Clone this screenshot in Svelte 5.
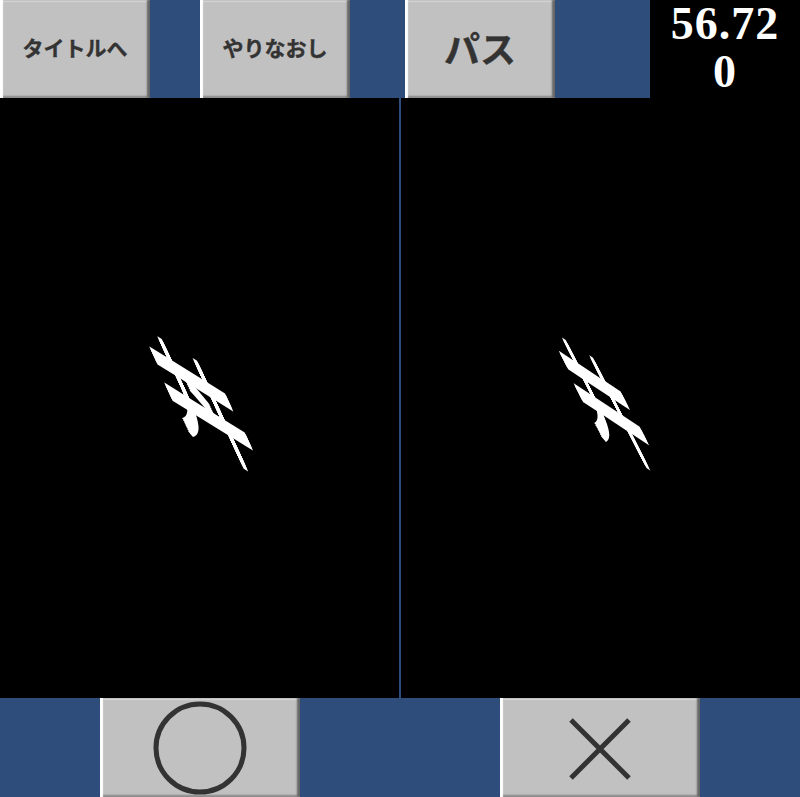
<script>
  const actions = [
    { label: 'タイトルへ', big: false },
    { label: 'やりなおし', big: false },
    { label: 'パス', big: true }
  ];
</script>

<div class="screen">
  <header class="top">
    <div class="actions">
      {#each actions as a}
        <button class="btn" class:big={a.big}>{a.label}</button>
      {/each}
    </div>
    <div class="score">56.72<br />0</div>
  </header>

  <main class="stage">
    <section class="panel">
      <span class="glyph left">丼</span>
    </section>
    <section class="panel">
      <span class="glyph right">井</span>
    </section>
  </main>

  <footer class="bottom">
    <button class="btn answer" aria-label="正解">
      <svg width="96" height="96" viewBox="0 0 96 96"><circle cx="48" cy="48" r="44" fill="none" stroke="#333" stroke-width="5" /></svg>
    </button>
    <button class="btn answer" aria-label="不正解">
      <svg width="96" height="96" viewBox="0 0 96 96"><path d="M19 20 L77 78 M77 20 L19 78" fill="none" stroke="#333" stroke-width="5" /></svg>
    </button>
  </footer>
</div>

<style>
  :global(body) {
    margin: 0;
    background: #000;
  }
  .screen {
    width: 800px;
    height: 797px;
    display: flex;
    flex-direction: column;
    background: #000;
    overflow: hidden;
  }
  .top {
    height: 98px;
    display: flex;
    flex: none;
  }
  .actions {
    flex: 1;
    display: flex;
    background: #2f4d7a;
  }
  .actions .btn {
    width: 150px;
    margin-right: 50px;
    font-size: 21px;
    padding-bottom: 5px;
    -webkit-text-stroke: 0.4px #333;
  }
  .actions .btn:nth-child(2) {
    margin-right: 55px;
  }
  .actions .btn.big {
    font-size: 36px;
    margin-right: 0;
  }
  .btn {
    box-sizing: border-box;
    padding: 0;
    border: none;
    display: flex;
    align-items: center;
    justify-content: center;
    background: #c1c1c1;
    color: #333;
    font-family: "Noto Sans CJK JP", sans-serif;
    font-weight: 700;
    box-shadow:
      inset 3px 0 1px #fff,
      inset -3px 0 2px #666,
      inset 0 2px 1px #dcdcdc,
      inset 0 -2px 2px #8a8a8a;
  }
  .score {
    width: 150px;
    color: #fff;
    font-family: "Liberation Serif", serif;
    font-weight: 700;
    font-size: 46px;
    letter-spacing: 1px;
    line-height: 48px;
    text-align: center;
  }
  .stage {
    height: 600px;
    flex: none;
    display: grid;
    grid-template-columns: 1fr 1fr;
    position: relative;
  }
  .stage::after {
    content: "";
    position: absolute;
    left: 399px;
    top: 0;
    bottom: 0;
    width: 2px;
    background: #2f4d7a;
  }
  .panel {
    display: flex;
    align-items: center;
    justify-content: center;
  }
  .glyph {
    color: #fff;
    font-family: "Noto Sans CJK JP", sans-serif;
    font-weight: 300;
    font-size: 100px;
    line-height: 100px;
    text-shadow:
      0 2px 0 #fff,
      0 -2px 0 #fff,
      0 4px 0 #fff,
      0 -4px 0 #fff,
      0 6px 0 #fff,
      0 -6px 0 #fff;
  }
  .glyph.left {
    transform: matrix(0.9, 0.56, 0.5, 1.08, 0, 0);
  }
  .glyph.right {
    transform: matrix(0.76, 0.5, 0.56, 1.1, 3, 0);
  }
  .bottom {
    flex: 1;
    display: flex;
    justify-content: space-around;
    background: #2f4d7a;
  }
  .answer {
    width: 200px;
    height: 99px;
    overflow: hidden;
  }
</style>
